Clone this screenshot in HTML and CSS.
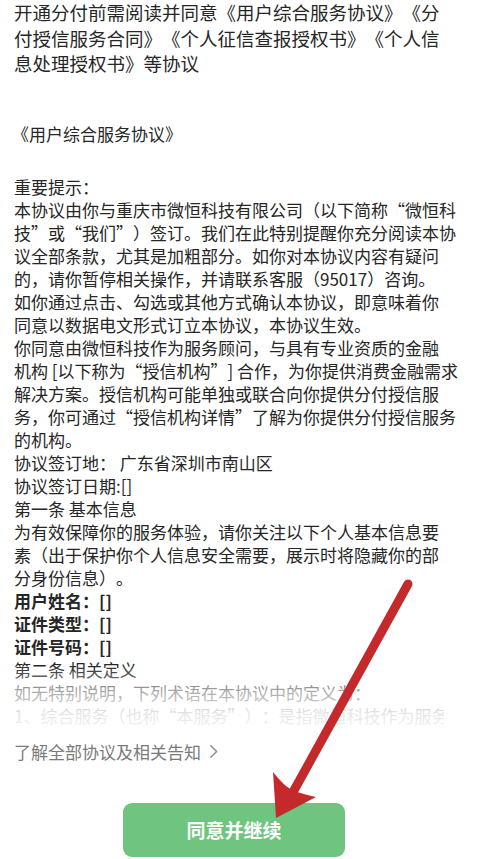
FILE: index.html
```html
<!DOCTYPE html>
<html lang="zh-CN">

<head>
    <meta charset="UTF-8">
    <meta name="viewport" content="width=device-width, initial-scale=1.0">
    <title>开通分付</title>
    <link rel="stylesheet" href="styles.css">
</head>

<body>
    <div class="page">
        <p class="intro">开通分付前需阅读并同意《用户综合服务协议》《分<br>付授信服务合同》《个人征信查报授权书》《个人信<br>息处理授权书》等协议</p>

        <div class="doc">
            <h2 class="doc-title">《用户综合服务协议》</h2>
            <div class="doc-body">
                <p class="notice">重要提示：</p>
                <p>本协议由你与重庆市微恒科技有限公司（以下简称“微恒科<br>技”或“我们”）签订。我们在此特别提醒你充分阅读本协<br>议全部条款，尤其是加粗部分。如你对本协议内容有疑问<br>的，请你暂停相关操作，并请联系客服（95017）咨询。<br>如你通过点击、勾选或其他方式确认本协议，即意味着你<br>同意以数据电文形式订立本协议，本协议生效。</p>
                <p>你同意由微恒科技作为服务顾问，与具有专业资质的金融<br>机构 [以下称为“授信机构”] 合作，为你提供消费金融需求<br>解决方案。授信机构可能单独或联合向你提供分付授信服<br>务，你可通过“授信机构详情”了解为你提供分付授信服务<br>的机构。</p>
                <p>协议签订地： 广东省深圳市南山区</p>
                <p>协议签订日期:[]</p>
                <p>第一条 基本信息</p>
                <p>为有效保障你的服务体验，请你关注以下个人基本信息要<br>素（出于保护你个人信息安全需要，展示时将隐藏你的部<br>分身份信息）。</p>
                <p class="field">用户姓名：[]</p>
                <p class="field">证件类型：[]</p>
                <p class="field">证件号码：[]</p>
                <p>第二条 相关定义</p>
                <p>如无特别说明，下列术语在本协议中的定义为：</p>
                <p class="clip">1、综合服务（也称“本服务”）：是指微恒科技作为服务顾问，为你提供的综合服务。</p>
            </div>
        </div>

        <a class="more" href="#">了解全部协议及相关告知
            <svg class="chevron" viewBox="0 0 10 16" width="9" height="15">
                <path d="M2 1.5 L8.5 8 L2 14.5" fill="none" stroke="#8a8a8a" stroke-width="1.6" stroke-linecap="round" stroke-linejoin="round" />
            </svg>
        </a>

        <div class="actions">
            <button class="agree">同意并继续</button>
        </div>
    </div>

    <!-- annotation arrow drawn over the screenshot -->
    <svg class="arrow" viewBox="0 0 479 859" width="479" height="859">
        <line x1="408" y1="584" x2="292" y2="794" stroke="#c42a2c" stroke-width="9" stroke-linecap="round" />
        <path d="M276 818 L273 772 Q284 786 292 790 Q302 794 316 797 Z" fill="#c42a2c" />
    </svg>
</body>

</html>
```

FILE: styles.css
```css
* {
    box-sizing: border-box;
}

body {
    margin: 0;
    background-color: #fff;
    font-family: "Noto Sans CJK SC", "Noto Sans", sans-serif;
    color: #262626;
    text-spacing-trim: space-all;
}

.page {
    width: 479px;
    height: 859px;
    overflow: hidden;
    padding: 0 4px 0 14px;
}

p {
    margin: 0;
}

.intro {
    font-size: 18.5px;
    line-height: 25.5px;
    white-space: nowrap;
}

.doc {
    margin-top: 45px;
}

.doc-title {
    font-size: 17px;
    font-weight: normal;
    line-height: 23px;
    margin: 0 0 30px -2px;
}

.doc-body {
    position: relative;
    font-size: 17px;
    line-height: 23px;
    height: 552px;
    overflow: hidden;
}

.doc-body p {
    white-space: nowrap;
}

/* fade the last lines out */
.doc-body::after {
    content: "";
    position: absolute;
    left: 0;
    right: 0;
    bottom: 0;
    height: 62px;
    background: linear-gradient(rgba(255, 255, 255, 0), rgba(255, 255, 255, 0.6) 42%, rgba(255, 255, 255, 0.88) 78%, rgba(255, 255, 255, 0.93));
}

.doc-body .clip {
    width: 430px;
    overflow: hidden;
}

.field {
    font-weight: bold;
}

.more {
    display: flex;
    align-items: center;
    gap: 8px;
    margin-top: 13px;
    font-size: 17px;
    line-height: 23px;
    color: #7a7a7a;
    text-decoration: none;
}

.actions {
    margin-top: 40px;
}

.agree {
    display: block;
    width: 222px;
    height: 54px;
    margin-left: 109px;
    border: none;
    border-radius: 9px;
    background-color: #6fc47f;
    color: #fff;
    font-family: inherit;
    font-size: 19px;
    font-weight: 600;
    cursor: pointer;
}

.arrow {
    position: absolute;
    left: 0;
    top: 0;
    pointer-events: none;
}
```
